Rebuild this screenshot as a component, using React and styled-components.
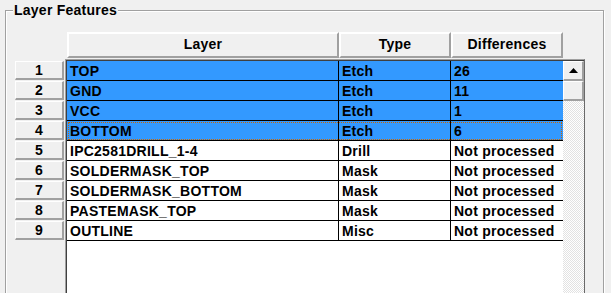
import React from 'react';
import styled, { createGlobalStyle, css } from 'styled-components';

const columns = [
  { key: 'layer', title: 'Layer', width: 272 },
  { key: 'type', title: 'Type', width: 112 },
  { key: 'diff', title: 'Differences', width: 112 },
];

const rows = [
  { layer: 'TOP', type: 'Etch', diff: '26', selected: true },
  { layer: 'GND', type: 'Etch', diff: '11', selected: true },
  { layer: 'VCC', type: 'Etch', diff: '1', selected: true },
  { layer: 'BOTTOM', type: 'Etch', diff: '6', selected: true, focused: true },
  { layer: 'IPC2581DRILL_1-4', type: 'Drill', diff: 'Not processed' },
  { layer: 'SOLDERMASK_TOP', type: 'Mask', diff: 'Not processed' },
  { layer: 'SOLDERMASK_BOTTOM', type: 'Mask', diff: 'Not processed' },
  { layer: 'PASTEMASK_TOP', type: 'Mask', diff: 'Not processed' },
  { layer: 'OUTLINE', type: 'Misc', diff: 'Not processed' },
];

const Global = createGlobalStyle`
  html, body { margin: 0; padding: 0; overflow: hidden; background: #f0f0f0; }
  body {
    font-family: "Liberation Sans", Arial, sans-serif;
    font-size: 14px;
    font-weight: bold;
    letter-spacing: 0.25px;
    color: #000;
  }
`;

// raised 3d look shared by buttons and column headers
const raised = css`
  box-sizing: border-box;
  background: #f0f0f0;
  border-style: solid;
  border-color: #fff #a0a0a0 #a0a0a0 #fff;
`;

const Screen = styled.div`
  height: 293px;
  overflow: hidden;
`;

const GroupBox = styled.div`
  position: relative;
  box-sizing: border-box;
  margin: 10px 0 0 5px;
  width: 599px;
  height: 300px;
  border: 1px solid #a0a0a0;
  box-shadow: inset 1px 1px 0 #fff, 1px 1px 0 #fff;
  padding: 21px 0 0 9px;
  display: flex;
  gap: 1px;
`;

const Caption = styled.span`
  position: absolute;
  top: -9px;
  left: 7px;
  padding: 0 1px;
  line-height: 16px;
  background: #f0f0f0;
`;

const RowHeaders = styled.div`
  width: 49px;
  margin-top: 29px;
  display: flex;
  flex-direction: column;
  gap: 1px;
`;

const RowButton = styled.div`
  ${raised};
  height: 19px;
  border-width: 1px 2px 2px 1px;
  display: flex;
  align-items: center;
  justify-content: center;
`;

const Table = styled.div`
  width: 520px;
  display: flex;
  flex-direction: column;
`;

const HeaderRow = styled.div`
  display: flex;
  margin: 0 0 1px 2px;
`;

const HeaderCell = styled.div`
  ${raised};
  width: ${p => p.$width}px;
  height: 26px;
  border-width: 2px;
  padding-bottom: 3px;
  display: flex;
  align-items: center;
  justify-content: center;
`;

const Body = styled.div`
  box-sizing: border-box;
  height: 260px;
  border-top: 1px solid #a0a0a0;
  border-left: 1px solid #a0a0a0;
  border-right: 1px solid #696969;
  padding: 1px 0 0 1px;
  box-shadow: inset 1px 1px 0 #404040;
  display: flex;
`;

const Cells = styled.div`
  width: 496px;
  background: #fff;
`;

const Row = styled.div`
  display: flex;
  height: 20px;
  box-sizing: border-box;
  border-bottom: 1px solid #000;
  background: ${p => (p.$selected ? '#3399ff' : '#fff')};
  ${p => p.$focused && css`
    outline: 1px dotted #cc6600;
    outline-offset: -2px;
  `}
`;

const Cell = styled.div`
  box-sizing: border-box;
  width: ${p => p.$width}px;
  padding-left: 3px;
  border-right: ${p => (p.$last ? 'none' : '1px solid #000')};
  display: flex;
  align-items: center;
  white-space: nowrap;
  overflow: hidden;
`;

const ScrollBar = styled.div`
  width: 21px;
  display: flex;
  flex-direction: column;
  background: repeating-conic-gradient(#fff 0% 25%, #e2e2e2 0% 50%) 0 0 / 2px 2px;
`;

const ScrollButton = styled.div`
  ${raised};
  height: 20px;
  border-width: 1px 2px 2px 1px;
  display: flex;
  align-items: center;
  justify-content: center;
`;

export default function App() {
  return (
    <Screen>
      <Global />
      <GroupBox>
        <Caption>Layer Features</Caption>
        <RowHeaders>
          {rows.map((r, i) => (
            <RowButton key={i}>{i + 1}</RowButton>
          ))}
        </RowHeaders>
        <Table>
          <HeaderRow>
            {columns.map(c => (
              <HeaderCell key={c.key} $width={c.width}>{c.title}</HeaderCell>
            ))}
          </HeaderRow>
          <Body>
            <Cells>
              {rows.map((r, i) => (
                <Row key={i} $selected={r.selected} $focused={r.focused}>
                  {columns.map((c, j) => (
                    <Cell key={c.key} $width={c.width} $last={j === columns.length - 1}>
                      {r[c.key]}
                    </Cell>
                  ))}
                </Row>
              ))}
            </Cells>
            <ScrollBar>
              <ScrollButton>
                <svg width="9" height="5" viewBox="0 0 9 5">
                  <polygon points="0,5 9,5 4.5,0" fill="#000" />
                </svg>
              </ScrollButton>
              <ScrollButton />
            </ScrollBar>
          </Body>
        </Table>
      </GroupBox>
    </Screen>
  );
}
